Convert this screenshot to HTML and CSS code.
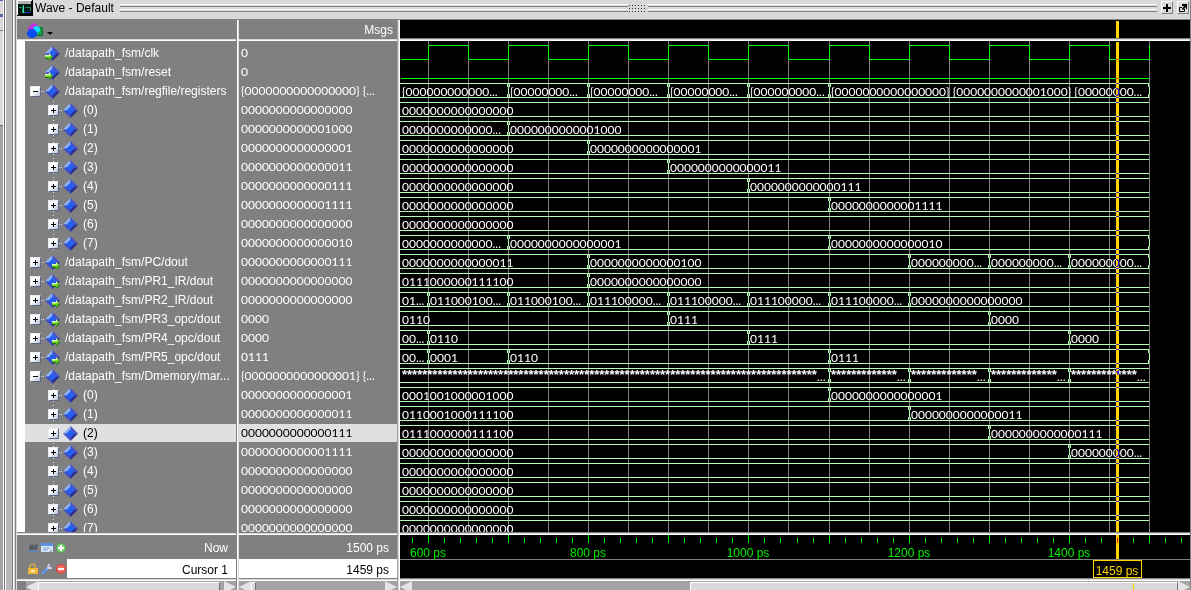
FILE: index.html
```html
<!DOCTYPE html>
<html lang="en">
<head>
<meta charset="utf-8">
<title>Wave - Default</title>
<link rel="stylesheet" href="styles.css">
</head>
<body>
<svg width="0" height="0" class="defs" aria-hidden="true">
  <symbol id="diamond" viewBox="0 0 15 15">
    <path d="M7.500 0 0 7.500 4 7.500 7.500 4z" fill="#8fb4fa"/>
    <path d="M7.500 0 15 7.500H11L7.500 4z" fill="#4552cc"/>
    <path d="M0 7.500 7.500 15V11L4 7.500z" fill="#3a4fd0"/>
    <path d="M15 7.500 7.500 15V11L11 7.500z" fill="#2a2a90"/>
    <path d="M7.500 3.500 11.500 7.500 7.500 11.500 3.500 7.500z" fill="#2260f4"/>
  </symbol>
  <symbol id="arrow" viewBox="0 0 8 8">
    <path d="M0 2.500H4V0.500L8 4.500 4 8V6H0z" fill="#1d6b0a"/>
    <path d="M0 2H4V0L7.500 3.500 4 7V5H0z" fill="#5fd01a"/>
    <path d="M0 2H4V0L6 2.500 4 3.500H0z" fill="#e4ffb0"/>
  </symbol>
</svg>
<div class="app">
  <div class="dock-edge"><span class="dock-tab"></span></div>
  <main class="window">
    <header class="titlebar">
      <svg class="app-icon" width="16" height="16" viewBox="0 0 16 16" aria-hidden="true">
        <path d="M0 0H16V16H0z" fill="#000"/><path d="M0 0H15V1H0zM0 0H1V15H0z" fill="#fff"/>
        <path d="M1 1H14V4H1z" fill="#b4b4b4"/><path d="M1 4H14V14H1z" fill="#031a10"/>
        <path d="M2 7.500H5.500V12.500H8M8.500 7.500H13.500V11" fill="none" stroke="#1f8f5a"/>
        <path d="M6.500 5V13" stroke="#40e0c0"/><path d="M8 12.500H13" stroke="#2a20d0"/>
      </svg>
      <h1 class="title">Wave - Default</h1>
      <span class="groove"></span><span class="grip"></span><span class="groove"></span>
      <button class="tool" aria-label="Zoom window"><svg width="8" height="8" viewBox="0 0 8 8"><path d="M3 0H5V3H8V5H5V8H3V5H0V3H3z"/></svg></button>
      <button class="tool" aria-label="Undock window"><svg width="8" height="8" viewBox="0 0 8 8"><path d="M3 0H8V5H7V3L4 6 3 5 5 2H3z"/><path d="M3 3.500H.5V7.500H5.500V5" fill="none" stroke="#000"/></svg></button>
    </header>

    <div class="panes">
      <section class="pane names">
        <div class="pane-head">
          <button class="picker" aria-label="Signal filter">
            <svg width="26" height="16" viewBox="0 0 26 16">
              <path d="M0 6 6 0 12 3 9 7H3z" fill="#c828e0"/><path d="M8.500 4.500H15.500V12.500H8.500z" fill="#12a040" stroke="#0a7030"/>
              <circle cx="9.500" cy="6.500" r="3.500" fill="#10e0ff"/><path d="M3 6H7L10 9V12L7 15H3L0 12V9z" fill="#0a4cf0"/>
              <path d="M20 9H26L23 12z" fill="#000"/>
            </svg>
          </button>
        </div>
        <div class="pane-body"><ul class="list" id="names"></ul></div>
        <div class="foot">
          <div class="foot-row">
            <span class="foot-icons">
              <svg width="12" height="12" viewBox="0 0 12 12"><path d="M2 4 5 2 7 4 10 1 11 5 9 8H2z" fill="#555d66"/><path d="M1 9.500H11" stroke="#4a8bd0"/></svg>
              <svg width="12" height="12" viewBox="0 0 12 12"><path d="M0 1H12V10H0z" fill="#d4e4fa"/><path d="M0 1H12V4H0z" fill="#5b93e4"/><path d="M2 6H9M2 8H7" stroke="#86a3cb"/><path d="M8 11 11 8" stroke="#667" stroke-width="1"/></svg>
              <svg width="12" height="12" viewBox="0 0 12 12"><circle cx="6" cy="6" r="5" fill="#53ad4c"/><circle cx="6" cy="6" r="4" fill="#80cf76"/><path d="M6 3V9M3 6H9" stroke="#fff" stroke-width="2"/></svg>
            </span>
            <span class="foot-label">Now</span>
          </div>
          <div class="foot-row">
            <span class="foot-icons">
              <svg width="12" height="12" viewBox="0 0 12 12"><path d="M3 6V3Q5 0 8 2V6" fill="none" stroke="#c9a050" stroke-width="2"/><path d="M1 5H11V11H1z" fill="#f3b63c"/><path d="M4 7H8V9H4z" fill="#fff0b4"/></svg>
              <svg width="12" height="12" viewBox="0 0 12 12"><path d="M1 11 8 4" stroke="#5f94e0" stroke-width="3"/><path d="M8 1 7 5 11 5" fill="none" stroke="#c8d4e6" stroke-width="2"/></svg>
              <svg width="12" height="12" viewBox="0 0 12 12"><circle cx="6" cy="6" r="5" fill="#e03c3c"/><circle cx="6" cy="6" r="4" fill="#f06a60"/><path d="M3 6H9" stroke="#fff" stroke-width="2"/></svg>
            </span>
            <span class="foot-label active">Cursor 1</span>
          </div>
        </div>
        <div class="scroll inset"><button class="step" aria-label="Scroll names left"></button><span class="thumb wide"></span><span class="gap"></span><button class="step next" aria-label="Scroll names right"></button></div>
      </section>

      <section class="pane values">
        <div class="pane-head"><span class="head-label">Msgs</span></div>
        <div class="pane-body"><ul class="list" id="values"></ul></div>
        <div class="foot">
          <div class="foot-row"><span class="foot-label">1500 ps</span></div>
          <div class="foot-row"><span class="foot-label active">1459 ps</span></div>
        </div>
        <div class="scroll"><button class="step" aria-label="Scroll values left"></button><span class="thumb small"></span><span class="trough"></span><button class="step next" aria-label="Scroll values right"></button></div>
      </section>

      <section class="pane waves">
        <div class="pane-head"><svg class="plot" id="head"></svg></div>
        <div class="pane-body"><svg class="plot" id="plot"></svg></div>
        <div class="foot"><svg class="plot" id="ruler"></svg></div>
        <div class="scroll"><button class="step" aria-label="Scroll waves left"></button><span class="trough track"></span><span class="thumb range"><i class="mark"></i></span><button class="step next" aria-label="Scroll waves right"></button></div>
      </section>
    </div>
  </main>
</div>
<script src="app.js"></script>
</body>
</html>
```
FILE: styles.css
```css
* { box-sizing: border-box; }
body {
  margin: 0;
  height: 100vh;
  overflow: hidden;
  background: #d9d9d9;
  font: 12px/18px "Liberation Sans", Arial, sans-serif;
  color: #fff;
}
ul { margin: 0; padding: 0; list-style: none; }
button { padding: 0; border: 0; background: none; font: inherit; color: inherit; }
svg { display: block; flex: none; }
.defs { position: absolute; }

.app { display: flex; height: 100vh; }
.dock-edge {
  flex: none;
  width: 17px;
  background: linear-gradient(90deg, #a3a3a3 3px, #fff 3px 4px, #707070 4px 5px, #fff 5px 6px, #b9b9b9 6px 12px, #828282 12px 13px, #fff 13px 14px, #d9d9d9 14px 15px, #828282 15px 16px, #d9d9d9 16px);
}
.dock-tab {
  display: block;
  width: 3px;
  height: 126px;
  background: linear-gradient(#5a6aa8 1px, #d9d9d9 1px 14px, #5a6aa8 14px 17px, #d9d9d9 17px 30px, #828282 30px 31px, #d9d9d9 31px 125px, #707070 125px);
}
.window { flex: 1; min-width: 0; display: flex; flex-direction: column; border-right: 1px solid #828282; }

.titlebar {
  flex: none;
  display: flex;
  align-items: flex-start;
  height: 20px;
  color: #000;
  background: #d9d9d9;
  border-bottom: 1px solid #828282;
}
.title { margin: 0 6px 0 2px; font-size: 12px; line-height: 16px; font-weight: 400; }
.groove {
  flex: 1;
  height: 12px;
  background: linear-gradient(transparent 4px, #fff 4px 5px, #d9d9d9 5px 6px, #828282 6px 7px, transparent 7px 9px, #fff 9px 10px, #d9d9d9 10px 11px, #828282 11px);
}
.grip {
  width: 18px;
  height: 7px;
  margin: 5px 1px 0;
  background:
    repeating-linear-gradient(transparent 0 1px, #d9d9d9 1px 3px),
    repeating-linear-gradient(90deg, #303030 0 1px, #d9d9d9 1px 3px);
}
.tool {
  display: grid;
  place-items: center;
  width: 12px;
  height: 13px;
  margin: 1px 0 0 4px;
  border: 1px solid #828282;
  border-top-color: #fff;
  border-left-color: #fff;
}
.tool + .tool { margin-right: 1px; }

.panes { flex: 1; min-height: 0; display: flex; }
.pane { display: flex; flex-direction: column; background: #808080; }
.names { width: 222px; }
.values { width: 161px; }
.names, .values {
  flex: none;
  border-right: 3px solid #fff;
  border-image: linear-gradient(90deg, #808080 calc(100% - 2px), #fff calc(100% - 2px) calc(100% - 1px), #d9d9d9 calc(100% - 1px)) 0 3 0 0;
}
.values { border-image-source: linear-gradient(90deg, #a0a0a0 calc(100% - 2px), #d9d9d9 calc(100% - 2px) calc(100% - 1px), #fff calc(100% - 1px)); }
.waves { flex: 1; min-width: 0; background: #000; }

.pane-head, .pane-body, .foot {
  flex: none;
  border-bottom: 3px solid #fff;
  border-image: linear-gradient(#808080 calc(100% - 2px), #d9d9d9 calc(100% - 2px) calc(100% - 1px), #fff calc(100% - 1px)) 0 0 3 0;
}
.pane-head { display: flex; height: 21px; padding: 2px 4px 0 10px; }
.waves .pane-head { padding: 0; }
.head-label { margin-left: auto; line-height: 16px; }
.picker { height: 16px; margin-top: 1px; }

.pane-body { flex: 1; min-height: 0; overflow: hidden; }
.names .pane-body { padding-left: 8px; background: linear-gradient(90deg, #fff 8px, transparent 8px); }
.list { padding-top: 3px; }
.row { display: flex; align-items: center; height: 18px; margin-bottom: 1px; white-space: nowrap; }
.row.selected { background: #e0e0e0; color: #000; }
.values .row { padding-left: 2px; }
.digits { font-family: Lato, "Liberation Sans", sans-serif; }

.names .row { padding-left: 5px; }
.row.child { background: repeating-linear-gradient(#dcdcdc 0 1px, transparent 1px 3px) 28px 0 / 1px 100% no-repeat; }
.row.child.selected { background-color: #e0e0e0; }
.names .row.child { padding-left: 23px; }
.names .row.leaf { padding-left: 20px; }
.expander {
  display: grid;
  place-items: center;
  width: 11px;
  height: 11px;
  background: linear-gradient(135deg, #fff 40%, #b4c0d6);
  border: 1px solid #e8ecf4;
  border-right-color: #5a6684;
  border-bottom-color: #5a6684;
}
.link { width: 4px; height: 1px; background: repeating-linear-gradient(90deg, #dcdcdc 0 1px, transparent 1px 2px); }
.kind { position: relative; width: 15px; height: 15px; margin-right: 5px; }
.arrow { position: absolute; top: 7px; }
.arrow.in { left: 0; }
.arrow.out { right: 0; }

.foot-row { display: flex; height: 19px; line-height: 18px; }
.foot-row:first-child { height: 24px; line-height: 26px; }
.foot-row:first-child .foot-icons { padding-top: 7px; }
.foot-icons { display: flex; gap: 2px; width: 50px; padding: 4px 0 0 10px; }
.foot-label { flex: 1; padding-right: 8px; text-align: right; }
.foot-label.active { background: #fff; color: #000; line-height: 22px; height: 19px; }

.scroll { flex: none; display: flex; height: 9px; overflow: hidden; background: #a3a3a3; }
.scroll.inset { padding-left: 9px; background: linear-gradient(90deg, #808080 9px, #a3a3a3 9px); }
.step { width: 12px; height: 12px; background: #e4e4e4; clip-path: polygon(0 50%, 100% 0, 100% 100%); }
.step.next { clip-path: polygon(0 0, 100% 50%, 0 100%); }
.thumb { height: 12px; margin-top: 1px; background: #d9d9d9; border: 1px solid #fff; border-right-color: #707070; }
.thumb.wide { flex: 1; }
.gap { width: 4px; }
.thumb.small { width: 5px; }
.trough { flex: 1; }
.trough.track { flex: 279; }
.thumb.range { flex: 487; position: relative; }
.mark { position: absolute; left: 91%; top: 0; width: 1px; height: 12px; background: #ffd200; }

.plot { width: 100%; height: 100%; overflow: hidden; }
.waves .pane-head, .waves .foot { overflow: hidden; }
.waves .foot .plot { height: 43px; }
.plot text { fill: #fff; font: 12px Lato, "Liberation Sans", sans-serif; }
.plot text.stars { font: bold 13px "Liberation Sans", Arial, sans-serif; }
.plot text.time { fill: #00f000; font: 12px "Liberation Sans", Arial, sans-serif; text-anchor: middle; }
.plot text.cursor-time { fill: #ffd200; font: 12px "Liberation Sans", Arial, sans-serif; text-anchor: middle; }
.grid { fill: #808080; }
.bus { fill: #b4ffb4; }
.bit { fill: none; stroke: #00ff00; }
.tick { fill: #00f000; }
.cursor { fill: #ffd200; mix-blend-mode: difference; }
.flag { fill: #000; stroke: #ffd200; }
```
FILE: app.js
```js
const ROW = 19, TOP = 3, END = 1500, CURSOR = 1459;
const Z = '0'.repeat(16);
const stars = n => '*'.repeat(n);
const bin = n => n.toString(2).padStart(16, '0');
const nine = '000000000...', cut = '0000000000000...', jmp = '011100000...';

// name, kind, value, [[start time, text], ...], bus closes at the end time
const signals = [
  ['/datapath_fsm/clk', 'leaf', '0'],
  ['/datapath_fsm/reset', 'leaf', '0'],
  ['/datapath_fsm/regfile/registers', 'open', `{${Z}} {...`, [[0, '{000000000000...'], [700, '{00000000...'], [800, '{00000000...'], [900, '{00000000...'], [1000, '{000000000...'], [1100, `{${Z}} {${bin(8)}} {00000000...`]], true],
  ['(0)', 'child', Z, [[0, Z]]],
  ['(1)', 'child', bin(8), [[0, cut], [700, bin(8)]]],
  ['(2)', 'child', bin(1), [[0, Z], [800, bin(1)]]],
  ['(3)', 'child', bin(3), [[0, Z], [900, bin(3)]]],
  ['(4)', 'child', bin(7), [[0, Z], [1000, bin(7)]]],
  ['(5)', 'child', bin(15), [[0, Z], [1100, bin(15)]]],
  ['(6)', 'child', Z, [[0, Z]]],
  ['(7)', 'child', bin(2), [[0, cut], [700, bin(1)], [1100, bin(2)]], true],
  ['/datapath_fsm/PC/dout', 'out', bin(7), [[0, bin(3)], [800, bin(4)], [1200, nine], [1300, nine], [1400, nine]], true],
  ['/datapath_fsm/PR1_IR/dout', 'out', Z, [[0, '0111000000111100'], [800, Z]]],
  ['/datapath_fsm/PR2_IR/dout', 'out', Z, [[0, '01...'], [600, '011000100...'], [700, '011000100...'], [800, jmp], [900, jmp], [1000, jmp], [1100, jmp], [1200, Z]]],
  ['/datapath_fsm/PR3_opc/dout', 'out', '0000', [[0, '0110'], [900, '0111'], [1300, '0000']]],
  ['/datapath_fsm/PR4_opc/dout', 'out', '0000', [[0, '00...'], [600, '0110'], [1000, '0111'], [1400, '0000']]],
  ['/datapath_fsm/PR5_opc/dout', 'out', '0111', [[0, '00...'], [600, '0001'], [700, '0110'], [1100, '0111']], true],
  ['/datapath_fsm/Dmemory/mar...', 'open', `{${bin(1)}} {...`, [[0, stars(82)], [1100, stars(13)], [1200, stars(13)], [1300, stars(13)], [1400, stars(13)]]],
  ['(0)', 'child', bin(1), [[0, '0001001000001000'], [1100, bin(1)]]],
  ['(1)', 'child', bin(3), [[0, '0110001000111100'], [1200, bin(3)]]],
  ['(2)', 'child', bin(7), [[0, '0111000000111100'], [1300, bin(7)]]],
  ['(3)', 'child', bin(15), [[0, Z], [1400, nine]]],
  ['(4)', 'child', Z, [[0, Z]]],
  ['(5)', 'child', Z, [[0, Z]]],
  ['(6)', 'child', Z, [[0, Z]]],
  ['(7)', 'child', Z, [[0, Z]]]
];
const SELECTED = 20;

const xAt = t => Math.round(28 + (t - 600) * 0.8) + (t > 1050 ? 1 : 0);
const rect = (cls, x, y, w, h) => `<rect class="${cls}" x="${x}" y="${y}" width="${w}" height="${h}"/>`;
const text = (x, y, s, cls = '') => `<text x="${x}" y="${y}" class="${cls}">${s}</text>`;
const right = xAt(END);

const icon = kind => {
  const dir = kind === 'leaf' ? 'in' : kind === 'out' ? 'out' : '';
  const arrow = dir ? `<svg class="arrow ${dir}" width="8" height="8"><use href="#arrow"/></svg>` : '';
  return `<span class="kind"><svg width="15" height="15"><use href="#diamond"/></svg>${arrow}</span>`;
};
const expander = (name, kind) => {
  if (kind === 'leaf') return '';
  const open = kind === 'open';
  const d = open ? 'M1 3H6V4H1z' : 'M1 3H3V1H4V3H6V4H4V6H3V4H1z';
  return `<button class="expander" aria-expanded="${open}" aria-label="Toggle ${name}"><svg width="7" height="7"><path d="${d}"/></svg></button><span class="link"></span>`;
};

document.getElementById('names').innerHTML = signals.map(([name, kind], i) =>
  `<li class="row ${kind}${i === SELECTED ? ' selected' : ''}">${expander(name, kind)}${icon(kind)}<span>${name}</span></li>`).join('');
document.getElementById('values').innerHTML = signals.map(([, , value], i) =>
  `<li class="row digits${i === SELECTED ? ' selected' : ''}">${value}</li>`).join('');

let grid = '', wave = '';
for (let t = 600; t <= END; t += 50) grid += rect('grid', xAt(t), 0, 1, '100%');

// clock toggles every 50 ps, reset stays low
let clk = `M1 ${TOP + 15.5}`;
for (let t = 600, high = true; t <= END; t += 50, high = !high) {
  clk += `H${xAt(t) + 0.5}V${TOP + (high ? 1.5 : 15.5)}`;
}
wave += `<path class="bit" d="${clk}"/><path class="bit" d="M1 ${TOP + ROW + 15.5}H${right}"/>`;

signals.forEach(([, , , segments, closed], i) => {
  if (!segments) return;
  const y = TOP + i * ROW + 1;
  wave += rect('bus', 0, y, right, 1) + rect('bus', 0, y + 14, right, 1);
  segments.forEach(([t, s], n) => {
    const x = t ? xAt(t) : 0;
    if (t) {
      for (const dx of [-1, 1]) wave += rect('bus', x + dx, y + 1, 1, 3) + rect('bus', x + dx, y + 11, 1, 3);
      wave += rect('bus', x, y + 4, 1, 7);
    }
    if (s[0] === '*') {
      const stop = n + 1 < segments.length ? xAt(segments[n + 1][0]) : right;
      wave += text(x + 2, y + 11, s, 'stars') + text(stop - 12, y + 13, '...');
    } else {
      wave += text(x + 2, y + 13, s);
    }
  });
  if (closed) wave += rect('bus', right - 1, y, 1, 4) + rect('bus', right, y + 4, 1, 7) + rect('bus', right - 1, y + 11, 1, 3);
});

const cx = xAt(CURSOR);
document.getElementById('plot').innerHTML = grid + wave + rect('cursor', cx, 1, 3, '100%');
document.getElementById('head').innerHTML = rect('cursor', cx, 1, 3, '100%');

let ruler = rect('grid', 0, 24, '100%', 1);
for (let t = 580; t <= 1540; t += 20) {
  const major = t % 100 === 0;
  ruler += rect('tick', xAt(t), major ? 0 : 3, 1, major ? 8 : 5);
}
for (let t = 600; t <= 1400; t += 200) ruler += text(xAt(t), 22, `${t} ps`, 'time');
ruler += rect('cursor', cx, 0, 3, 24) + rect('flag', cx - 23 + 0.5, 25.5, 48, 17) + text(cx + 1, 40, `${CURSOR} ps`, 'cursor-time');
document.getElementById('ruler').innerHTML = ruler;
```
